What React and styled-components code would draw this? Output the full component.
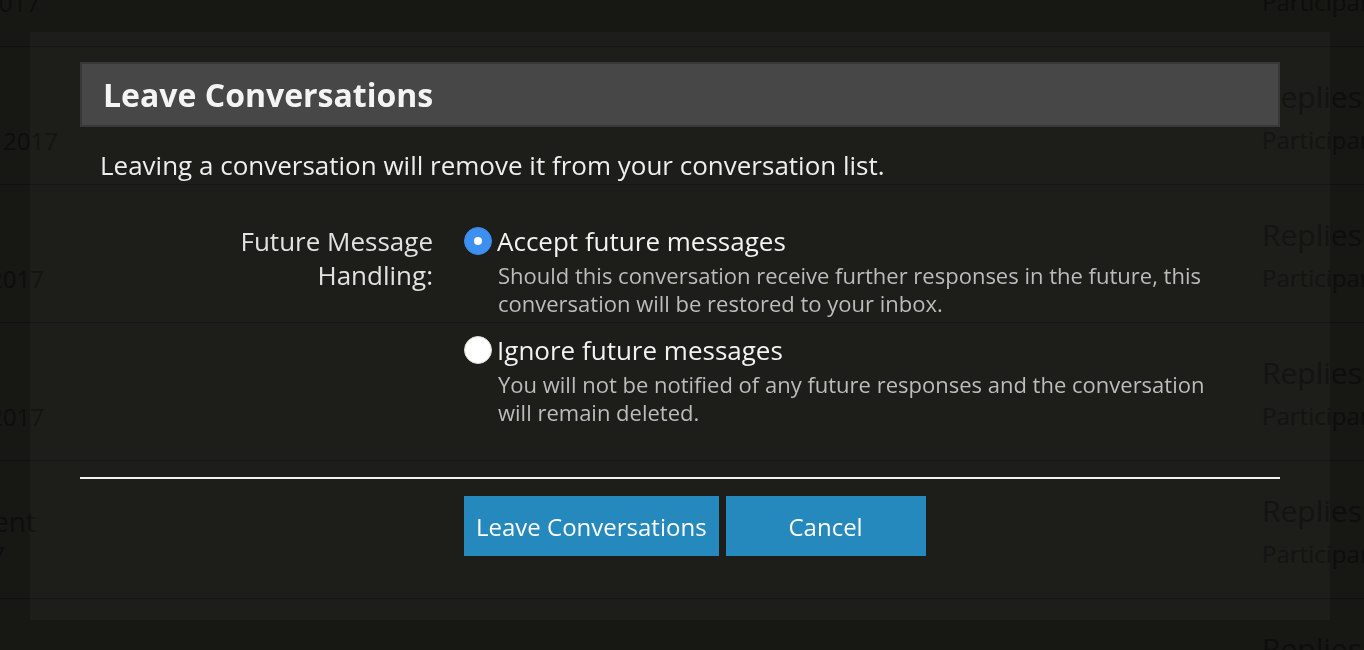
import React from "react";
import styled, { createGlobalStyle } from "styled-components";

const GlobalStyle = createGlobalStyle`
  html, body {
    margin: 0;
    background: #171714;
    overflow: hidden;
    font-family: "Open Sans", "Liberation Sans", sans-serif;
  }
`;

// Page behind the dialog (dimmed list of conversations)
const Page = styled.div`
  height: 650px;
  overflow: hidden;
  color: #0e0e0d;
`;

const List = styled.div`
  margin-top: -91px;
`;

const Row = styled.div`
  display: flex;
  height: 137px;
  border-bottom: 1px solid #111114;
`;

const DateCell = styled.div`
  width: 60px;
  box-sizing: border-box;
  padding-right: ${(p) => p.$pad}px;
  display: flex;
  flex-direction: column;
  align-items: flex-end;
  justify-content: flex-end;
  padding-bottom: 28px;
  white-space: nowrap;
  font-size: 24px;
  line-height: 30px;
`;

const TitleLine = styled.div`
  font-size: 28px;
  line-height: 38px;
`;

const DateLine = styled.div`
  margin-right: ${(p) => p.$shift || 0}px;
`;

const Spacer = styled.div`
  flex: 1;
`;

const StatsCell = styled.div`
  width: 102px;
  padding-top: 32px;
  white-space: nowrap;
  overflow: hidden;
`;

const Replies = styled.div`
  font-size: 30px;
  line-height: 36px;
`;

const Participants = styled.div`
  font-size: 24px;
  line-height: 50px;
`;

// Dialog
const Dialog = styled.div`
  position: fixed;
  top: 32px;
  left: 30px;
  width: 1300px;
  height: 588px;
  box-sizing: border-box;
  padding: 30px 50px 0;
  background: rgba(255, 255, 215, 0.026);
`;

const Header = styled.div`
  height: 65px;
  box-sizing: border-box;
  border: 2px solid #393939;
  background: #474747;
  padding: 0 21px;
  display: flex;
  align-items: center;
`;

const Title = styled.h2`
  margin: 0;
  font-size: 32px;
  line-height: 40px;
  font-weight: 700;
  color: #f4f4f4;
`;

const Intro = styled.p`
  margin: 20px 0 0;
  padding-left: 20px;
  font-size: 26px;
  line-height: 36px;
  color: #eeeeee;
`;

const FormRow = styled.div`
  display: grid;
  grid-template-columns: 384px 1fr;
  margin-top: 41px;
`;

const Label = styled.div`
  text-align: right;
  padding-right: 31px;
  font-size: 26px;
  line-height: 34px;
  color: #e2e2e2;
`;

const Options = styled.div`
  display: flex;
  flex-direction: column;
  gap: 16px;
`;

const RadioLine = styled.label`
  display: flex;
  align-items: center;
  gap: 5px;
  font-size: 26px;
  line-height: 34px;
  color: #f2f2f2;
`;

const Radio = styled.span`
  width: 28px;
  height: 28px;
  border-radius: 50%;
  box-sizing: border-box;
  flex-shrink: 0;
  display: flex;
  align-items: center;
  justify-content: center;
  background: ${(p) => (p.$checked ? "#3d8ff0" : "#ffffff")};
  border: 1px solid ${(p) => (p.$checked ? "#3a8ae8" : "#d8d8d8")};

  &::after {
    content: "";
    width: 8px;
    height: 8px;
    border-radius: 50%;
    background: #fff;
    display: ${(p) => (p.$checked ? "block" : "none")};
  }
`;

const Hint = styled.div`
  margin-top: 3px;
  padding-left: 34px;
  max-width: 730px;
  font-size: 22px;
  line-height: 28px;
  color: #bcbcbc;
`;

const Divider = styled.hr`
  margin: 51px 0 0;
  border: 0;
  height: 2px;
  background: #f2f2f2;
`;

const Buttons = styled.div`
  display: flex;
  gap: 7px;
  margin-top: 17px;
  padding-left: 384px;
`;

const Button = styled.button`
  height: 60px;
  min-width: 200px;
  padding: 0 12px;
  border: none;
  background: #2589bd;
  color: #ffffff;
  font-family: "Open Sans", "Liberation Sans", sans-serif;
  font-size: 24px;
`;

const rows = [
  { pad: 20, date: "2017" },
  { pad: 2, date: "Jan 2017" },
  { pad: 16, date: "Feb 2017" },
  { pad: 16, date: "Mar 2017" },
  { pad: 24, title: "Announcement", date: "Apr 2017", shift: 31 },
  { pad: 16, date: "May 2017" },
];

export default function App() {
  return (
    <>
      <GlobalStyle />
      <Page>
        <List>
          {rows.map((r, i) => (
            <Row key={i}>
              <DateCell $pad={r.pad}>
                {r.title && <TitleLine>{r.title}</TitleLine>}
                <DateLine $shift={r.shift}>{r.date}</DateLine>
              </DateCell>
              <Spacer />
              <StatsCell>
                <Replies>Replies: 3</Replies>
                <Participants>Participants: 2</Participants>
              </StatsCell>
            </Row>
          ))}
        </List>
      </Page>

      <Dialog>
        <Header>
          <Title>Leave Conversations</Title>
        </Header>
        <Intro>Leaving a conversation will remove it from your conversation list.</Intro>

        <FormRow>
          <Label>
            Future Message
            <br />
            Handling:
          </Label>
          <Options>
            <div>
              <RadioLine>
                <Radio $checked />
                Accept future messages
              </RadioLine>
              <Hint>
                Should this conversation receive further responses in the future, this
                conversation will be restored to your inbox.
              </Hint>
            </div>
            <div>
              <RadioLine>
                <Radio />
                Ignore future messages
              </RadioLine>
              <Hint>
                You will not be notified of any future responses and the conversation
                will remain deleted.
              </Hint>
            </div>
          </Options>
        </FormRow>

        <Divider />
        <Buttons>
          <Button>Leave Conversations</Button>
          <Button>Cancel</Button>
        </Buttons>
      </Dialog>
    </>
  );
}
